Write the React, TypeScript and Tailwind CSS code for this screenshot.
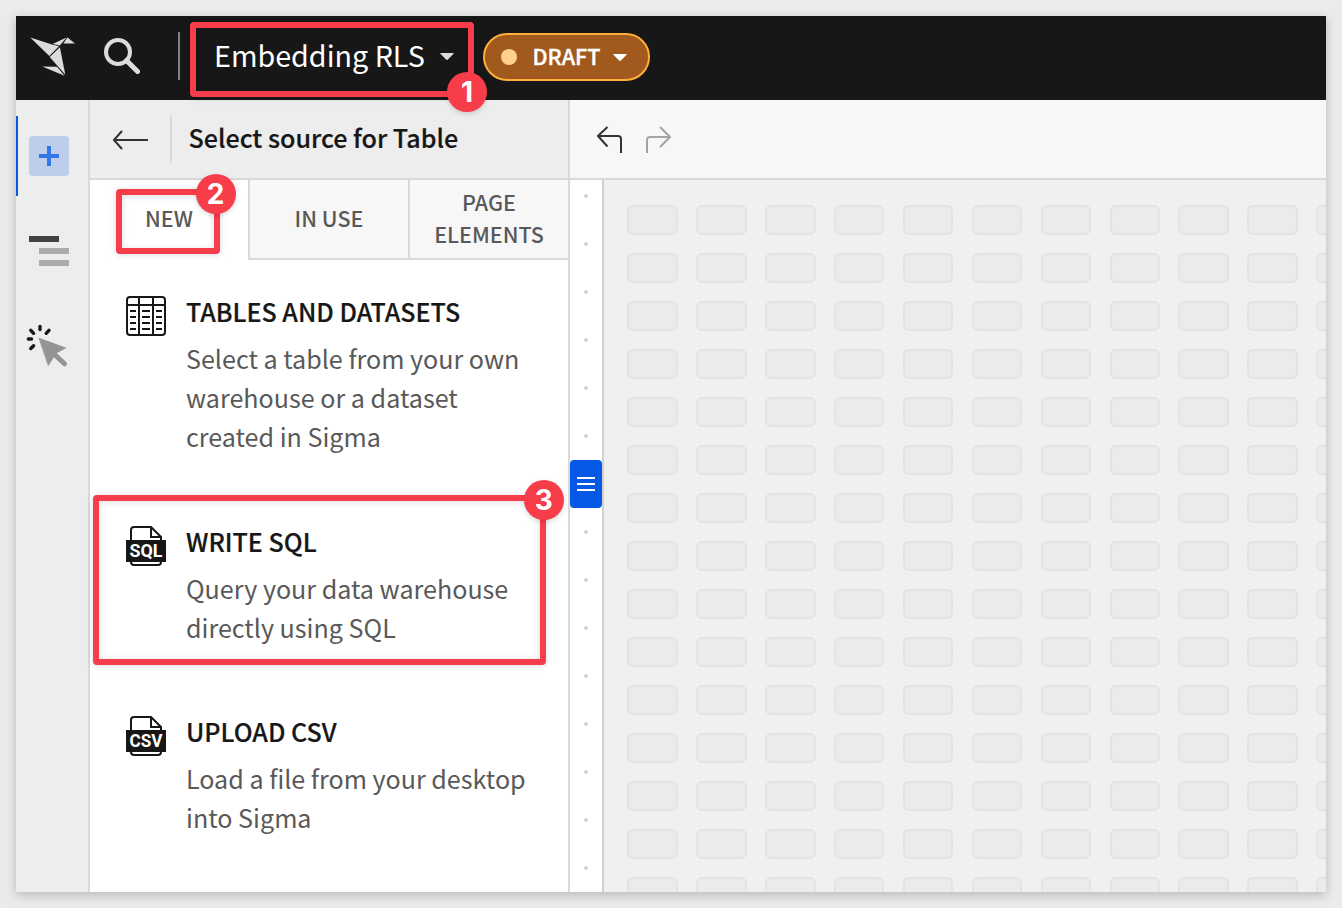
import React from "react";

const SEMI = "font-medium [-webkit-text-stroke:0.2px_currentColor]";

function Badge({ n, className }: { n: string; className: string }) {
  return (
    <span className={"absolute flex size-10 items-center justify-center rounded-full bg-[#f83d4a] font-['Inter'] text-[28px] leading-none font-bold text-white shadow-[0_2px_5px_rgba(0,0,0,0.15)] " + className}>
      {n}
    </span>
  );
}

function Highlight({ className }: { className: string }) {
  return (
    <div className={"absolute rounded-[4px] border-6 border-[#f83d4a] drop-shadow-[0_1px_3px_rgba(0,0,0,0.14)] " + className} />
  );
}

function Bird() {
  return (
    <svg className="relative top-[2.5px] h-11 w-12 shrink-0" viewBox="0 0 48 44" fill="#dcdcdc">
      <path d="M.3.4 22 7.600 29 9.300 19.300 19Z" />
      <path d="M22.500 6.900 36.600.600 29.800 8.600Z" />
      <path d="M37.500.500 45 6.400H33.300Z" />
      <path d="M19.700 19.900 29.900 10.300 35.300 37.800Z" />
      <path d="M12.300 29.600 27 29.800 34.500 38.700Z" />
    </svg>
  );
}

function Caret({ className }: { className: string }) {
  return (
    <svg className={"h-[7px] w-[14px] " + className} viewBox="0 0 14 7">
      <path d="M.8 0H13.2Q14 .4 13.4 1L7.6 6.7Q7 7.2 6.4 6.7L.6 1Q0 .4 .8 0Z" fill="currentColor" />
    </svg>
  );
}

function TableIcon() {
  return (
    <svg className="size-10" viewBox="0 0 40 40" fill="none" stroke="#171717" strokeWidth="2">
      <rect x="1" y="1" width="38" height="38" rx="3" />
      <path d="M1 9H39M13 1V39M27 1V39" />
      <path d="M4 15H10M4 21H10M4 27H10M4 33H10M16 15H24M16 21H24M16 27H24M16 33H24M30 15H36M30 21H36M30 27H36M30 33H36" />
    </svg>
  );
}

function FileIcon({ label }: { label: string }) {
  return (
    <svg className="size-10" viewBox="0 0 40 40">
      <g fill="none" stroke="#171717" strokeWidth="2">
        <path d="M5 15V4Q5 1 8 1H25L35 11V15M5 35V36Q5 39 8 39H32Q35 39 35 36V35" />
        <path d="M25 1V11H35" />
      </g>
      <rect y="14" width="40" height="22" fill="#171717" />
      <text x="20" y="31" textAnchor="middle" fontSize="18.5" fontWeight="700" fill="#fff" textLength="33" lengthAdjust="spacingAndGlyphs" fontFamily="Roboto, sans-serif">
        {label}
      </text>
    </svg>
  );
}

function Source({ icon, title, lines, className }: { icon: React.ReactNode; title: string; lines: string[]; className: string }) {
  return (
    <section className={"flex gap-[20px] pl-9 " + className}>
      <div className="w-10 shrink-0">{icon}</div>
      <div className="whitespace-nowrap">
        <h2 className={"-mt-[4px] text-[25.05px] leading-[39px] text-[#171717] " + SEMI}>{title}</h2>
        <p className="mt-[8px] text-[25.1px] leading-[39px] text-[#595959]">
          {lines.map((l) => (
            <span key={l} className="block">{l}</span>
          ))}
        </p>
      </div>
    </section>
  );
}

export default function App() {
  return (
    <div className="relative h-[908px] w-[1342px] overflow-hidden bg-[#ebebeb] p-4 font-['Noto_Sans_CJK_SC',sans-serif]">
      <div className="flex h-[876px] w-[1310px] flex-col overflow-hidden bg-white shadow-[0_3px_10px_rgba(0,0,0,0.22)]">
        <header className="flex h-[84px] shrink-0 items-center bg-[#171717] pb-1 pl-[14px] text-white">
          <Bird />
          <svg className="ml-[26px] size-9" viewBox="0 0 36 36" fill="none" stroke="#dcdcdc">
            <circle cx="14" cy="14" r="12" strokeWidth="4" />
            <path d="M22.5 22.5 33.5 33.5" strokeWidth="5" strokeLinecap="round" />
          </svg>
          <div className="ml-[38px] h-12 w-[2px] bg-[#808080]" />
          <span className="mb-[2px] ml-[34px] w-[212px] text-[28.7px] leading-[42px] whitespace-nowrap">Embedding RLS</span>
          <Caret className="ml-[14px] text-[#dcdcdc]" />
          <div className="mt-[2px] ml-[29px] flex h-12 w-[167px] items-center rounded-full border-2 border-[#ffad3b] bg-[#a1591d]">
            <span className="ml-4 size-4 rounded-full bg-[#ffd28a]" />
            <span className="mb-[2px] ml-[15.5px] w-[67.500px] text-[21.6px] leading-8 font-medium [-webkit-text-stroke:0.35px_currentColor]">DRAFT</span>
            <Caret className="ml-[13px]" />
          </div>
        </header>
        <div className="flex min-h-0 flex-1">
          <nav className="flex w-[74px] shrink-0 flex-col border-r-2 border-[#d9d9d9] bg-[#ededed] pt-4">
            <div className="flex h-20 items-center border-l-2 border-[#0559e5] pl-[11px]">
              <div className="flex size-10 items-center justify-center rounded-[4px] bg-[#bfcdec]">
                <svg className="size-5" viewBox="0 0 20 20" stroke="#3276ea" strokeWidth="4"><path d="M10 0V20M0 10H20" /></svg>
              </div>
            </div>
            <svg className="mt-10 ml-[13px] h-[30px] w-10" viewBox="0 0 40 30">
              <path d="M0 0H30V6H0Z" fill="#424242" />
              <path d="M10 12H40V18H10ZM10 24H40V30H10Z" fill="#ababab" />
            </svg>
            <svg className="mt-[58px] ml-[10px] h-[44px] w-[44px]" viewBox="0 0 44 44" strokeLinecap="round">
              <path d="M14 2.500V5.500M4.800 6.300 7.600 9.300M23 6.300 20.200 9.300M2.300 15H5.500M4.800 24.500 7.600 21.700" stroke="#171717" strokeWidth="3.4" />
              <path d="M13.500 14.500 39.500 24 30 29 22.500 41Z" fill="#949494" stroke="#949494" strokeLinejoin="round" />
              <path d="M26 28 38.500 39.800" stroke="#949494" strokeWidth="5" />
            </svg>
          </nav>
          <aside className="flex w-[480px] shrink-0 flex-col border-r-2 border-[#d9d9d9] bg-white">
            <div className="flex h-20 shrink-0 items-center border-b-2 border-[#d9d9d9] bg-[#ededed]">
              <svg className="mt-[2px] ml-[23px] h-5 w-9" viewBox="0 0 36 20" fill="none" stroke="#333" strokeWidth="2"><path d="M1 10H35M9 1 1 10 9 19" /></svg>
              <div className="ml-[21px] h-12 w-[2px] bg-[#d9d9d9]" />
              <h1 className={"mb-1 ml-[16.5px] text-[25.1px] leading-9 whitespace-nowrap text-[#171717] " + SEMI}>Select source for Table</h1>
            </div>
            <div className="flex h-20 shrink-0 text-center text-[21.5px] leading-8 font-medium text-[#595959]">
              <div className="flex w-[158px] items-center justify-center pb-1">NEW</div>
              <div className="flex w-[160px] items-center justify-center border-b-2 border-l-2 border-[#d9d9d9] bg-[#f7f7f7] pb-[2px]">IN USE</div>
              <div className="flex w-[160px] items-center justify-center border-b-2 border-l-2 border-[#d9d9d9] bg-[#f7f7f7] pb-[2px]">PAGE<br />ELEMENTS</div>
            </div>
            <Source className="mt-9 h-[230px]" icon={<TableIcon />} title="TABLES AND DATASETS" lines={["Select a table from your own", "warehouse or a dataset", "created in Sigma"]} />
            <Source className="h-[190px]" icon={<FileIcon label="SQL" />} title="WRITE SQL" lines={["Query your data warehouse", "directly using SQL"]} />
            <Source className="h-[140px]" icon={<FileIcon label="CSV" />} title="UPLOAD CSV" lines={["Load a file from your desktop", "into Sigma"]} />
          </aside>
          <main className="flex min-w-0 flex-1 flex-col">
            <div className="flex h-20 shrink-0 items-center border-b-2 border-[#d9d9d9] bg-[#f7f7f7] pl-[27px]">
              <svg className="h-7 w-[26px]" viewBox="0 0 26 28" fill="none" stroke="#333" strokeWidth="2"><path d="M10.500 2 1 11 10.500 21.500M1 11H21Q24 11 24 14V28" /></svg>
              <svg className="ml-[22px] h-7 w-[26px]" viewBox="0 0 26 28" fill="none" stroke="#a3a3a3" strokeWidth="2"><path d="M15 2 25 12 15 22M25 12H5Q2 12 2 15V28" /></svg>
            </div>
            <div className="flex min-h-0 flex-1">
              <div className="relative flex w-[34px] shrink-0 flex-col items-center gap-11 border-r-2 border-[#d1d1d1] bg-white pt-[14px]">
                {Array.from({ length: 15 }, (_, i) => (
                  <span key={i} className="size-1 shrink-0 rounded-full bg-[#d4d4d4]" />
                ))}
                <div className="absolute top-[280px] left-0 flex h-12 w-8 flex-col items-center justify-center gap-1 rounded-[4px] bg-[#0559e5]">
                  <i className="h-[2px] w-[18px] bg-white" />
                  <i className="h-[2px] w-[18px] bg-white" />
                  <i className="h-[2px] w-[18px] bg-white" />
                </div>
              </div>
              <div className="grid min-w-0 flex-1 auto-rows-[30px] grid-cols-[repeat(11,50.5px)] gap-x-[18.4px] gap-y-[18px] overflow-hidden bg-[#f0f0f0] pt-[25px] pl-[23.3px]">
                {Array.from({ length: 165 }, (_, i) => (
                  <span key={i} className="rounded-[6px] border-2 border-[#e3e3e3] bg-[#ebebeb]" />
                ))}
              </div>
            </div>
          </main>
        </div>
      </div>
      <Highlight className="top-[22px] left-[190px] h-[75px] w-[284px]" />
      <Badge n="1" className="top-[72px] left-[447px]" />
      <Highlight className="top-[189px] left-[116px] h-[65px] w-[104px]" />
      <Badge n="2" className="top-[174px] left-[195.5px]" />
      <Highlight className="top-[495.4px] left-[93.4px] h-[169.6px] w-[452.2px]" />
      <Badge n="3" className="top-[480px] left-[523.7px]" />
    </div>
  );
}
